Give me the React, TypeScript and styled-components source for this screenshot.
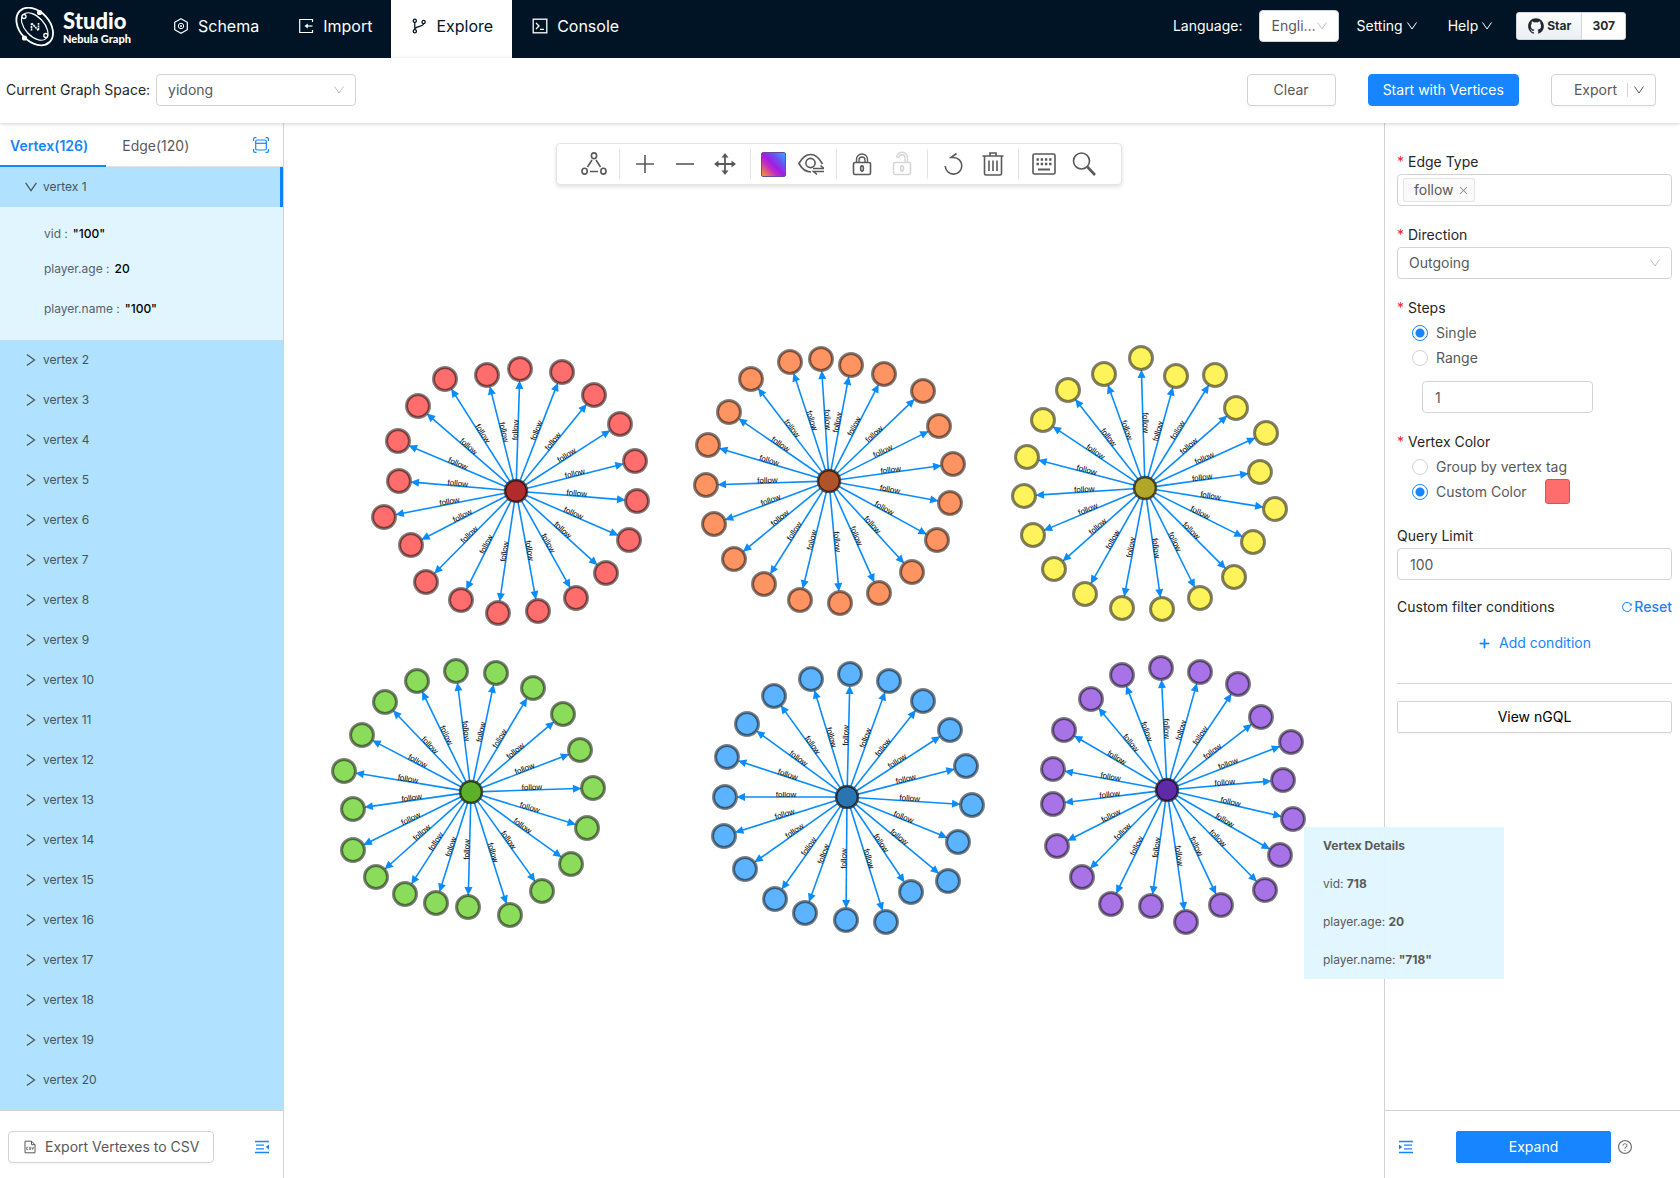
import React from 'react';
import styled, { createGlobalStyle, css } from 'styled-components';
import { AiFillGithub, AiOutlineQuestionCircle, AiOutlineReload, AiOutlinePlus, AiOutlineClose } from 'react-icons/ai';

const c = {
  blue: '#1785ff',
  edge: '#0a8cff',
  navy: '#001425',
  title: '#262626',
  text: '#595959',
  line: '#d3d3d3',
  rowBg: '#b0e2ff',
  detailBg: '#e1f5ff',
};

const GlobalStyle = createGlobalStyle`
  *, *::before, *::after { box-sizing: border-box; }
  body {
    margin: 0;
    color: ${c.text};
    background: #fff;
    font: 14px/22px Inter, "Liberation Sans", sans-serif;
  }
  button, input, select { font: inherit; color: inherit; margin: 0; }
  button { cursor: pointer; padding: 0; border: 0; background: none; }
  a { text-decoration: none; color: inherit; }
  svg { display: block; flex: none; }
`;

/* ---------- shared parts ---------- */

const Page = styled.div`
  display: flex;
  flex-direction: column;
  height: 100vh;
  min-height: 900px;
`;

const Button = styled.button<{ $primary?: boolean; $square?: boolean; $pad?: number }>`
  display: inline-flex;
  align-items: center;
  justify-content: center;
  height: 32px;
  padding: 0 ${p => p.$pad ?? 14}px;
  border: 1px solid ${p => (p.$primary ? c.blue : c.line)};
  border-radius: ${p => (p.$square ? 2 : 4)}px;
  background: ${p => (p.$primary ? c.blue : '#fff')};
  color: ${p => (p.$primary ? '#fff' : c.text)};
  box-shadow: 0 2px 0 rgba(0, 0, 0, 0.02);
  white-space: nowrap;
`;

const box = css`
  height: 32px;
  width: 100%;
  border: 1px solid ${c.line};
  border-radius: 4px;
  background: #fff;
  color: ${c.text};
`;

const TextInput = styled.input`
  ${box}
  padding: 0 12px;
`;

const SelectShell = styled.span<{ $width?: string }>`
  display: inline-grid;
  grid-template-columns: minmax(0, 1fr);
  align-items: center;
  width: ${p => p.$width ?? '100%'};
  > * { grid-area: 1 / 1; }
  > svg { justify-self: end; margin-right: 12px; pointer-events: none; color: #bfbfbf; }
`;

const NativeSelect = styled.select`
  ${box}
  appearance: none;
  padding: 0 20px 0 11px;
  overflow: hidden;
  white-space: nowrap;
  text-overflow: ellipsis;
`;

const Chevron = ({ size = 10 }: { size?: number }) => (
  <svg width={size} height={size} viewBox="0 0 10 10" fill="none" stroke="currentColor" aria-hidden="true">
    <path d="M.5 1.500 5 8 9.500 1.500" />
  </svg>
);

interface DropdownProps { id: string; value: string; width?: string }
const Dropdown = ({ id, value, width }: DropdownProps) => (
  <SelectShell $width={width}>
    <NativeSelect id={id} defaultValue={value}>
      <option>{value}</option>
    </NativeSelect>
    <Chevron />
  </SelectShell>
);

/* ---------- header ---------- */

const Header = styled.header`
  display: flex;
  flex: none;
  height: 58px;
  padding-right: 54px;
  background: ${c.navy};
  color: #fff;
`;

const Brand = styled.a`
  display: flex;
  align-items: center;
  gap: 8px;
  width: 153px;
  padding: 0 0 4px 15px;
`;

const Wordmark = styled.span`
  display: flex;
  flex-direction: column;
  font-family: Lato, sans-serif;
  font-weight: 900;
  white-space: nowrap;
`;
const BrandName = styled.span`font-size: 22px; line-height: 24px;`;
const BrandSub = styled.span`font-size: 11px; line-height: 12px;`;

const Nav = styled.nav`display: flex;`;

const NavLink = styled.a<{ $active?: boolean }>`
  display: flex;
  align-items: center;
  gap: 9px;
  padding: 0 19px 6px 20px;
  font-size: 16px;
  color: ${p => (p.$active ? c.navy : '#fff')};
  background: ${p => (p.$active ? '#fff' : 'transparent')};
`;

const HeaderTools = styled.div`
  display: flex;
  align-items: center;
  gap: 17px;
  margin-left: auto;
  padding-bottom: 6px;
`;

const MenuGroup = styled.div`
  display: flex;
  gap: 31px;
  margin-right: 7px;
`;

const MenuButton = styled.button`
  display: flex;
  align-items: center;
  gap: 4px;
`;

const StarBadge = styled.div`
  display: flex;
  height: 28px;
  border: 1px solid #d4d4d4;
  border-radius: 3px;
  overflow: hidden;
  background: #fff;
  color: #24292e;
  font-size: 12px;
  font-weight: 700;
`;
const StarLink = styled.a<{ $tint?: boolean }>`
  display: flex;
  align-items: center;
  gap: 2px;
  padding: 0 10px;
  ${p => p.$tint && css`
    background: linear-gradient(#fafbfc, #ebf0f4);
    border-right: 1px solid #d4d4d4;
  `}
`;

const Logo = () => (
  <svg width="40" height="40" viewBox="0 0 40 40" fill="none" stroke="#fff" aria-hidden="true">
    <g transform="rotate(47 19.700 19.500)">
      <ellipse cx="19.700" cy="19.500" rx="21.500" ry="15" strokeWidth="1.800" />
      <ellipse cx="19.700" cy="19.500" rx="16.500" ry="9.500" strokeWidth="1.200" />
    </g>
    <circle cx="24.600" cy="5.500" r="2.600" fill="#fff" stroke="none" />
    <circle cx="9.500" cy="31" r="2.600" fill="#fff" stroke="none" />
    <circle cx="9" cy="9.500" r="2" fill={c.navy} strokeWidth="1.300" />
    <circle cx="30.800" cy="28.500" r="2" fill={c.navy} strokeWidth="1.300" />
    <path d="M16.500 23.500v-7.500l7 7.500v-7.500" strokeWidth="1.600" strokeDasharray="2 .6" />
  </svg>
);

const SchemaIcon = () => (
  <svg width="16" height="16" viewBox="0 0 16 16" fill="none" stroke="currentColor" aria-hidden="true">
    <path d="M8 .7 14.300 4.300v7.400L8 15.300 1.700 11.700V4.300z" strokeWidth="1.200" />
    <circle cx="8" cy="8" r="2.700" />
    <circle cx="8" cy="8" r="1" fill="currentColor" stroke="none" />
  </svg>
);
const ImportIcon = () => (
  <svg width="16" height="16" viewBox="0 0 16 16" fill="none" stroke="currentColor" strokeWidth="1.200" aria-hidden="true">
    <path d="M14.500 4V1.500H1.700v13h12.800V12" />
    <path d="M14.500 8H8" />
    <path d="M9.800 5.600v4.800L6.500 8z" fill="currentColor" stroke="none" />
  </svg>
);
const ExploreIcon = () => (
  <svg width="16" height="16" viewBox="0 0 16 16" fill="none" stroke="currentColor" strokeWidth="1.300" aria-hidden="true">
    <circle cx="3.800" cy="2.800" r="1.600" />
    <circle cx="3.800" cy="13.200" r="1.600" />
    <circle cx="12.600" cy="4" r="1.600" />
    <path d="M3.800 4.400v7.200M12.600 5.600c0 3.400-6.500 2.200-8.600 5" />
  </svg>
);
const ConsoleIcon = () => (
  <svg width="16" height="16" viewBox="0 0 16 16" fill="none" stroke="currentColor" strokeWidth="1.300" aria-hidden="true">
    <rect x="1.200" y="1.200" width="13.600" height="13.600" />
    <path d="m4 5 3 3-3 3M8 11.300h4" />
  </svg>
);

/* ---------- space bar ---------- */

const SpaceBar = styled.div`
  display: flex;
  flex: none;
  align-items: center;
  height: 65px;
  padding: 0 24px 1px 6px;
  background: #fff;
  box-shadow: 0 1px 4px rgba(0, 0, 0, 0.18);
  z-index: 2;
`;
const SpaceLabel = styled.label`
  margin-right: 6px;
  color: ${c.title};
`;
const SpaceActions = styled.div`
  display: flex;
  gap: 32px;
  margin-left: auto;
`;
const ExportButton = styled(Button)`
  padding: 0 11px 0 22px;
`;
const SplitMark = styled.span`
  width: 1px;
  height: 14px;
  margin: 0 6px 0 10px;
  background: ${c.line};
`;

/* ---------- left panel ---------- */

const Body = styled.div`
  display: flex;
  flex: 1;
  min-height: 0;
`;

const Sidebar = styled.aside`
  display: flex;
  flex: none;
  flex-direction: column;
  width: 284px;
  border-right: 1px solid ${c.line};
`;

const TabBar = styled.div`
  display: flex;
  flex: none;
  align-items: stretch;
  gap: 16px;
  height: 44px;
  padding-right: 14px;
  border-bottom: 1px solid #e3e3e3;
  color: ${c.blue};
`;
const Tab = styled.button<{ $active?: boolean }>`
  padding: 4px 18px 0 10px;
  margin-bottom: -1px;
  border-bottom: 2px solid ${p => (p.$active ? c.blue : 'transparent')};
  color: ${p => (p.$active ? c.blue : c.text)};
  font-weight: ${p => (p.$active ? 600 : 400)};
  &:nth-child(2) { padding-left: 0; }
`;
const IconButton = styled.button<{ $push?: boolean }>`
  display: flex;
  align-items: center;
  color: ${c.blue};
  ${p => p.$push && css`margin-left: auto;`}
`;

const VertexList = styled.div`
  flex: 1;
  min-height: 0;
  overflow: hidden;
  background: ${c.rowBg};
  font-size: 12px;
`;
const VertexRow = styled.button<{ $open?: boolean }>`
  display: flex;
  align-items: center;
  gap: 6px;
  width: 100%;
  height: 40px;
  padding-left: 25px;
  color: #44545e;
  border-right: 3px solid ${p => (p.$open ? '#0a84ff' : 'transparent')};
  > svg { transform: ${p => (p.$open ? 'none' : 'rotate(-90deg)')}; }
`;
const VertexDetail = styled.dl`
  display: grid;
  row-gap: 13px;
  margin: 0;
  padding: 16px 44px 20px;
  background: ${c.detailBg};
`;
const Prop = styled.div`
  display: flex;
  gap: 5px;
  line-height: 22px;
  dt { color: #54616a; }
  dd { margin: 0; color: #000; font-weight: 500; }
  &:last-child { padding-top: 5px; }
`;

const PanelFooter = styled.div<{ $left?: boolean }>`
  display: flex;
  flex: none;
  align-items: center;
  height: 68px;
  padding: 4px 14px 0 ${p => (p.$left ? 8 : 14)}px;
  border-top: 1px solid ${c.line};
`;
const FileButton = styled(Button)`
  gap: 8px;
`;

const TableFocusIcon = () => (
  <svg width="16" height="16" viewBox="0 0 16 16" fill="none" stroke="currentColor" strokeWidth="1.200" aria-hidden="true">
    <path d="M.6 4V2Q.6.6 2 .6h1.500M12.500.6H14q1.400 0 1.400 1.400v2M15.400 12v2q0 1.400-1.400 1.400h-1.500M3.500 15.400H2Q.6 15.400.6 14v-2" />
    <rect x="2.700" y="3" width="10.600" height="10" rx="1.500" />
    <path d="M2.700 6.300h10.600" />
  </svg>
);
const FoldIcon = ({ flip }: { flip?: boolean }) => (
  <svg width="14" height="14" viewBox="0 0 14 14" fill="none" stroke="currentColor" strokeWidth="1.300" aria-hidden="true">
    <g transform={flip ? 'matrix(-1 0 0 1 14 0)' : undefined}>
      <path d="M0 1.500h14M0 12.500h14M1 5.200h8M1 8.800h8" />
      <path d="M14 4.500v5L10.700 7z" fill="currentColor" stroke="none" />
    </g>
  </svg>
);
const CsvIcon = () => (
  <svg width="14" height="14" viewBox="0 0 14 14" fill="none" stroke="currentColor" aria-hidden="true">
    <path d="M2 12.800V1.200h6.500L12 4.700v8.100zM8.500 1.200v3.500H12" />
    <path d="M5.200 7.300H3.700v2.200h1.500M7.800 7.300H6.500v1.100h1.200v1.100H6.300M8.900 7.200l.8 2.300.8-2.300" strokeWidth=".8" />
  </svg>
);

/* ---------- graph canvas ---------- */

const Canvas = styled.main`
  position: relative;
  flex: 1;
  min-width: 0;
  background: #fff;
`;
const GraphSvg = styled.svg`
  position: absolute;
  inset: 0;
  width: 100%;
  height: 100%;
  font-family: "Liberation Sans", sans-serif;
`;
const ToolRow = styled.div`
  position: relative;
  display: flex;
  justify-content: center;
  padding: 20px 0 0 9px;
`;
const ToolBar = styled.div`
  display: flex;
  align-items: center;
  height: 42px;
  padding: 0 17px;
  border: 1px solid #e4e4e4;
  border-radius: 4px;
  background: #fff;
  box-shadow: 0 2px 4px rgba(0, 0, 0, 0.12);
`;
const Tool = styled.button<{ $dim?: boolean; $narrow?: boolean }>`
  display: flex;
  align-items: center;
  justify-content: center;
  width: ${p => (p.$narrow ? 35 : 40)}px;
  height: 40px;
  color: ${p => (p.$dim ? '#d6d6d6' : '#595959')};
`;
const ToolSplit = styled.span`
  width: 1px;
  height: 30px;
  margin: 0 5px;
  background: #e3e3e3;
`;
const GradientSwatch = styled.span`
  width: 25px;
  height: 25px;
  border: 1px solid #6a4a9a;
  border-radius: 2px;
  background: linear-gradient(45deg, #ff9c1a 0%, #c02bc8 35%, #a01ee0 50%, #6a55f0 72%, #1fb4ff 100%);
`;

const toolPaths: Record<string, React.ReactNode> = {
  layout: (
    <>
      <ellipse cx="13" cy="4.800" rx="2.600" ry="2.900" />
      <ellipse cx="3.600" cy="20.200" rx="2.600" ry="2.900" />
      <ellipse cx="22.400" cy="20.200" rx="2.600" ry="2.900" />
      <path d="M11 9 6.500 16M15 9l4.500 7M9 20.500h8" />
    </>
  ),
  plus: <path d="M13 4v18M4 13h18" />,
  minus: <path d="M4 13h18" />,
  move: (
    <>
      <path d="M13 4v18M4 13h18" strokeWidth="1.800" />
      <path d="M13 2l3.500 4.500h-7zM13 24l3.500-4.500h-7zM2 13l4.500-3.500v7zM24 13l-4.500-3.500v7z" fill="currentColor" stroke="none" />
    </>
  ),
  eye: (
    <>
      <path d="M24.500 13C21 6.500 17 3.500 12.500 3.500S4 7 1 12.500C4 18 8 21 13 21" />
      <circle cx="12.500" cy="12" r="4.600" />
      <path d="M15 17.500h11M22.500 14.500l3.500 3M26 20.500H15.500l3.500 3" />
    </>
  ),
  lock: (
    <>
      <rect x="4.500" y="11.500" width="17" height="12" rx="1.500" />
      <path d="M7.500 11.500V8.500a5.500 5.500 0 0 1 11 0v3M10 11.500V9a3 3 0 0 1 6 0v2.500" strokeWidth="1.400" />
      <ellipse cx="13" cy="17.500" rx="1.400" ry="2.600" />
    </>
  ),
  unlock: (
    <>
      <rect x="4.500" y="11.500" width="17" height="12" rx="1.500" />
      <path d="M7.500 6.500a5.500 5.500 0 0 1 11 .5v4.500M10 6.500a3 3 0 0 1 6 .5v4.500M7.500 6.500H10" strokeWidth="1.400" />
      <ellipse cx="13" cy="17.500" rx="1.400" ry="2.600" />
    </>
  ),
  undo: <path d="M16.500 2.500 11 6.500h2.500a8.300 8.300 0 1 1-8.300 8.500" />,
  trash: (
    <>
      <path d="M2.500 5h21M10 5V2h6v3M4.500 5v17.500q0 1.500 1.500 1.500h14q1.500 0 1.500-1.500V5" />
      <path d="M9 9.500V20M13 9.500V20M17 9.500V20" />
    </>
  ),
  keyboard: (
    <>
      <rect x="2" y="3" width="22" height="20" rx="1.500" />
      <path d="M5.500 8.500h15M5.500 13h15" strokeWidth="2.400" strokeDasharray="2.400 1.800" />
      <path d="M7 18.500h12" strokeWidth="2" />
    </>
  ),
  search: (
    <>
      <circle cx="10.500" cy="10" r="8" />
      <path d="m16.500 16 7.500 8" strokeWidth="2.600" />
    </>
  ),
};
const ToolIcon = ({ name }: { name: string }) => (
  <svg width="26" height="26" viewBox="0 0 26 26" fill="none" stroke="currentColor" strokeWidth="1.600" aria-hidden="true">
    {toolPaths[name]}
  </svg>
);

const toolGroups = [
  ['layout'],
  ['plus', 'minus', 'move'],
  ['palette', 'eye'],
  ['lock', 'unlock'],
  ['undo', 'trash'],
  ['keyboard', 'search'],
];

type Point = [number, number];
interface Cluster { x: number; y: number; fill: string; core: string; leaves: Point[] }

const clusters: Cluster[] = [
  {
    x: 232, y: 368, fill: '#ff6e6c', core: '#b02c2c',
    leaves: [[-71, -112], [-29, -116], [4, -122], [46, -119], [78, -96], [104, -67], [119, -30], [121, 10], [113, 49], [90, 82],
      [60, 107], [22, 120], [-18, 122], [-55, 109], [-90, 91], [-105, 54], [-132, 26], [-117, -10], [-118, -50], [-98, -85]],
  },
  {
    x: 545, y: 358, fill: '#ff9463', core: '#b0522a',
    leaves: [[-78, -102], [-39, -119], [-8, -122], [22, -116], [55, -107], [94, -90], [110, -55], [124, -17], [121, 22], [108, 59],
      [83, 91], [50, 112], [11, 122], [-29, 119], [-65, 103], [-95, 78], [-115, 43], [-123, 4], [-121, -36], [-100, -69]],
  },
  {
    x: 861, y: 365, fill: '#fff35c', core: '#b0a72a',
    leaves: [[-77, -98], [-41, -114], [-4, -130], [31, -112], [70, -113], [91, -80], [121, -55], [115, -16], [130, 21], [108, 54],
      [89, 89], [55, 110], [17, 121], [-23, 120], [-60, 106], [-91, 81], [-112, 47], [-121, 8], [-118, -31], [-102, -68]],
  },
  {
    x: 187, y: 669, fill: '#8cdc5c', core: '#5cb02a',
    leaves: [[-86, -90], [-54, -111], [-15, -121], [25, -119], [62, -104], [92, -78], [109, -42], [122, -4], [116, 36], [100, 72],
      [71, 99], [39, 123], [-3, 115], [-35, 111], [-66, 102], [-95, 85], [-118, 58], [-118, 17], [-127, -21], [-109, -57]],
  },
  {
    x: 563, y: 674, fill: '#5cb3ff', core: '#2a74b0',
    leaves: [[3, -123], [-36, -118], [-73, -101], [-100, -73], [-120, -40], [-122, 0], [-123, 39], [-102, 72], [-72, 102], [-42, 116],
      [-1, 123], [39, 125], [64, 95], [101, 84], [111, 45], [125, 8], [119, -31], [103, -67], [76, -96], [42, -116]],
  },
  {
    x: 883, y: 667, fill: '#a873e6', core: '#5f2aa5',
    leaves: [[-6, -122], [-45, -115], [-76, -91], [-103, -60], [-114, -21], [-114, 14], [-110, 56], [-85, 87], [-56, 114], [-16, 116],
      [19, 132], [54, 115], [98, 100], [113, 65], [126, 29], [116, -10], [124, -48], [94, -73], [71, -106], [33, -118]],
  },
];

const NODE_R = 11.5;

const Edge = ({ to: [dx, dy] }: { to: Point }) => {
  const length = Math.hypot(dx, dy);
  const angle = (Math.atan2(dy, dx) * 180) / Math.PI;
  const tip = length - NODE_R;
  const flipped = dx < 0;
  return (
    <g transform={`rotate(${angle})`}>
      <path d={`M${NODE_R} 0H${tip - 5}`} stroke={c.edge} strokeWidth="1.600" />
      <path d={`M${tip} 0l-8.500 -4v8z`} fill={c.edge} />
      <text
        textAnchor="middle"
        fontSize="8"
        fill="#000"
        transform={`translate(${length / 2} 0)${flipped ? ' rotate(180)' : ''}`}
      >
        follow
      </text>
    </g>
  );
};

const Graph = () => (
  <GraphSvg role="img" aria-label="Vertex graph">
    {clusters.map(k => (
      <g key={k.fill} transform={`translate(${k.x} ${k.y})`}>
        {k.leaves.map((leaf, i) => <Edge key={i} to={leaf} />)}
        <g stroke="#000" strokeOpacity=".5" strokeWidth="3">
          {k.leaves.map(([x, y], i) => <circle key={i} cx={x} cy={y} r={NODE_R} fill={k.fill} />)}
          <circle r="11" fill={k.core} strokeOpacity=".65" strokeWidth="2.500" />
        </g>
      </g>
    ))}
  </GraphSvg>
);

const VertexCard = styled.div`
  position: absolute;
  left: 1020px;
  top: 704px;
  z-index: 3;
  width: 200px;
  padding: 0 19px;
  background: rgba(224, 246, 255, 0.95);
  font-size: 12px;
  line-height: 38px;
  white-space: nowrap;
`;
const CardLine = styled.div`
  b { font-weight: 700; }
`;

/* ---------- right panel ---------- */

const Panel = styled.aside`
  display: flex;
  flex: none;
  flex-direction: column;
  width: 296px;
  border-left: 1px solid ${c.line};
`;
const PanelForm = styled.form`
  flex: 1;
  min-height: 0;
  padding: 28px 8px 0 12px;
`;
const Field = styled.div<{ $space?: number }>`
  margin-bottom: ${p => p.$space ?? 18}px;
`;
const FieldLabel = styled.label<{ $required?: boolean }>`
  display: block;
  margin-bottom: 1px;
  color: ${c.title};
  ${p => p.$required && css`
    &::before { content: "*"; margin-right: 4px; color: #f5222d; }
  `}
`;
const TagBox = styled.div`
  ${box}
  display: flex;
  align-items: center;
  padding: 0 5px;
`;
const TagChip = styled.span`
  display: inline-flex;
  align-items: center;
  gap: 4px;
  height: 24px;
  padding: 0 5px 0 10px;
  border: 1px solid #e4e4e4;
  border-radius: 2px;
  background: #fafafa;
  button { color: #8c8c8c; }
`;
const TagInput = styled.input`
  flex: 1;
  min-width: 0;
  border: 0;
  outline: 0;
  background: none;
`;
const RadioRow = styled.div`
  display: flex;
  align-items: center;
  height: 25px;
  padding-left: 15px;
`;
const RadioLabel = styled.label`
  display: flex;
  align-items: center;
  gap: 8px;
`;
const Radio = styled.input`
  appearance: none;
  width: 16px;
  height: 16px;
  border: 1px solid ${c.line};
  border-radius: 50%;
  background: #fff;
  &:checked {
    border-color: ${c.blue};
    background: radial-gradient(circle, ${c.blue} 4px, #fff 5px);
  }
`;
const StepInput = styled(TextInput)`
  display: block;
  width: 171px;
  margin: 11px 0 0 25px;
`;
const ColorSwatch = styled.button`
  width: 25px;
  height: 25px;
  margin-left: 18px;
  border: 1px solid #c95a58;
  border-radius: 3px;
  background: #ff6e6c;
`;
const FilterRow = styled.div`
  display: flex;
  justify-content: space-between;
  color: ${c.title};
`;
const LinkButton = styled.button<{ $gap: number; $medium?: boolean }>`
  display: flex;
  align-items: center;
  gap: ${p => p.$gap}px;
  color: ${c.blue};
  font-weight: ${p => (p.$medium ? 500 : 400)};
`;
const AddRow = styled.div`
  display: flex;
  justify-content: center;
  padding: 14px 0 29px;
`;
const NgqlBlock = styled.div`
  padding-top: 17px;
  border-top: 1px solid ${c.line};
`;
const NgqlButton = styled(Button)`
  width: 100%;
  color: #000;
`;
const ExpandButton = styled(Button)`
  width: 155px;
  margin: 0 6px 0 auto;
`;
const HelpButton = styled.button`
  margin-right: 33px;
  color: #737373;
`;

export default function App() {
  const vertices = Array.from({ length: 19 }, (_, i) => i + 2);
  return (
    <>
      <GlobalStyle />
      <Page>
        <Header>
          <Brand href="#">
            <Logo />
            <Wordmark>
              <BrandName>Studio</BrandName>
              <BrandSub>Nebula Graph</BrandSub>
            </Wordmark>
          </Brand>
          <Nav>
            <NavLink href="#schema"><SchemaIcon />Schema</NavLink>
            <NavLink href="#import"><ImportIcon />Import</NavLink>
            <NavLink href="#explore" $active><ExploreIcon />Explore</NavLink>
            <NavLink href="#console"><ConsoleIcon />Console</NavLink>
          </Nav>
          <HeaderTools>
            <label htmlFor="language">Language:</label>
            <Dropdown id="language" value="English" width="80px" />
            <MenuGroup>
              <MenuButton>Setting<Chevron /></MenuButton>
              <MenuButton>Help<Chevron /></MenuButton>
            </MenuGroup>
            <StarBadge>
              <StarLink href="#star" $tint><AiFillGithub size={18} />Star</StarLink>
              <StarLink href="#stargazers">307</StarLink>
            </StarBadge>
          </HeaderTools>
        </Header>

        <SpaceBar>
          <SpaceLabel htmlFor="space">Current Graph Space:</SpaceLabel>
          <Dropdown id="space" value="yidong" width="200px" />
          <SpaceActions>
            <Button $pad={26}>Clear</Button>
            <Button $primary>Start with Vertices</Button>
            <ExportButton>
              Export
              <SplitMark />
              <Chevron />
            </ExportButton>
          </SpaceActions>
        </SpaceBar>

        <Body>
          <Sidebar>
            <TabBar>
              <Tab $active>Vertex(126)</Tab>
              <Tab>Edge(120)</Tab>
              <IconButton $push aria-label="Show as table"><TableFocusIcon /></IconButton>
            </TabBar>
            <VertexList>
              <VertexRow $open><Chevron size={12} />vertex 1</VertexRow>
              <VertexDetail>
                <Prop><dt>vid :</dt><dd>"100"</dd></Prop>
                <Prop><dt>player.age :</dt><dd>20</dd></Prop>
                <Prop><dt>player.name :</dt><dd>"100"</dd></Prop>
              </VertexDetail>
              {vertices.map(n => (
                <VertexRow key={n}><Chevron size={12} />vertex {n}</VertexRow>
              ))}
            </VertexList>
            <PanelFooter $left>
              <FileButton><CsvIcon />Export Vertexes to CSV</FileButton>
              <IconButton $push aria-label="Collapse list"><FoldIcon /></IconButton>
            </PanelFooter>
          </Sidebar>

          <Canvas>
            <Graph />
            <ToolRow>
              <ToolBar role="toolbar" aria-label="Graph tools">
                {toolGroups.map((group, i) => (
                  <React.Fragment key={group[0]}>
                    {i > 0 && <ToolSplit />}
                    {group.map(name => (
                      <Tool key={name} aria-label={name} $dim={name === 'unlock'} $narrow={name === 'palette'}>
                        {name === 'palette' ? <GradientSwatch /> : <ToolIcon name={name} />}
                      </Tool>
                    ))}
                  </React.Fragment>
                ))}
              </ToolBar>
            </ToolRow>
            <VertexCard>
              <CardLine><b>Vertex Details</b></CardLine>
              <CardLine>vid: <b>718</b></CardLine>
              <CardLine>player.age: <b>20</b></CardLine>
              <CardLine>player.name: <b>"718"</b></CardLine>
            </VertexCard>
          </Canvas>

          <Panel>
            <PanelForm onSubmit={e => e.preventDefault()}>
              <Field>
                <FieldLabel $required htmlFor="edge-type">Edge Type</FieldLabel>
                <TagBox>
                  <TagChip>follow<button type="button" aria-label="Remove follow"><AiOutlineClose size={11} /></button></TagChip>
                  <TagInput id="edge-type" />
                </TagBox>
              </Field>
              <Field>
                <FieldLabel $required htmlFor="direction">Direction</FieldLabel>
                <Dropdown id="direction" value="Outgoing" />
              </Field>
              <Field>
                <FieldLabel $required htmlFor="steps">Steps</FieldLabel>
                <RadioRow><RadioLabel><Radio type="radio" name="steps" defaultChecked />Single</RadioLabel></RadioRow>
                <RadioRow><RadioLabel><Radio type="radio" name="steps" />Range</RadioLabel></RadioRow>
                <StepInput id="steps" defaultValue="1" />
              </Field>
              <Field $space={21}>
                <FieldLabel $required as="div">Vertex Color</FieldLabel>
                <RadioRow><RadioLabel><Radio type="radio" name="color" />Group by vertex tag</RadioLabel></RadioRow>
                <RadioRow>
                  <RadioLabel><Radio type="radio" name="color" defaultChecked />Custom Color</RadioLabel>
                  <ColorSwatch type="button" aria-label="Pick color" />
                </RadioRow>
              </Field>
              <Field $space={16}>
                <FieldLabel htmlFor="limit">Query Limit</FieldLabel>
                <TextInput id="limit" defaultValue="100" />
              </Field>
              <FilterRow>
                Custom filter conditions
                <LinkButton type="button" $gap={1} $medium><AiOutlineReload size={12} />Reset</LinkButton>
              </FilterRow>
              <AddRow>
                <LinkButton type="button" $gap={8}><AiOutlinePlus size={13} strokeWidth={60} />Add condition</LinkButton>
              </AddRow>
              <NgqlBlock>
                <NgqlButton type="button" $square>View nGQL</NgqlButton>
              </NgqlBlock>
            </PanelForm>
            <PanelFooter>
              <IconButton aria-label="Collapse panel"><FoldIcon flip /></IconButton>
              <ExpandButton $primary $square>Expand</ExpandButton>
              <HelpButton aria-label="Help"><AiOutlineQuestionCircle size={16} /></HelpButton>
            </PanelFooter>
          </Panel>
        </Body>
      </Page>
    </>
  );
}
